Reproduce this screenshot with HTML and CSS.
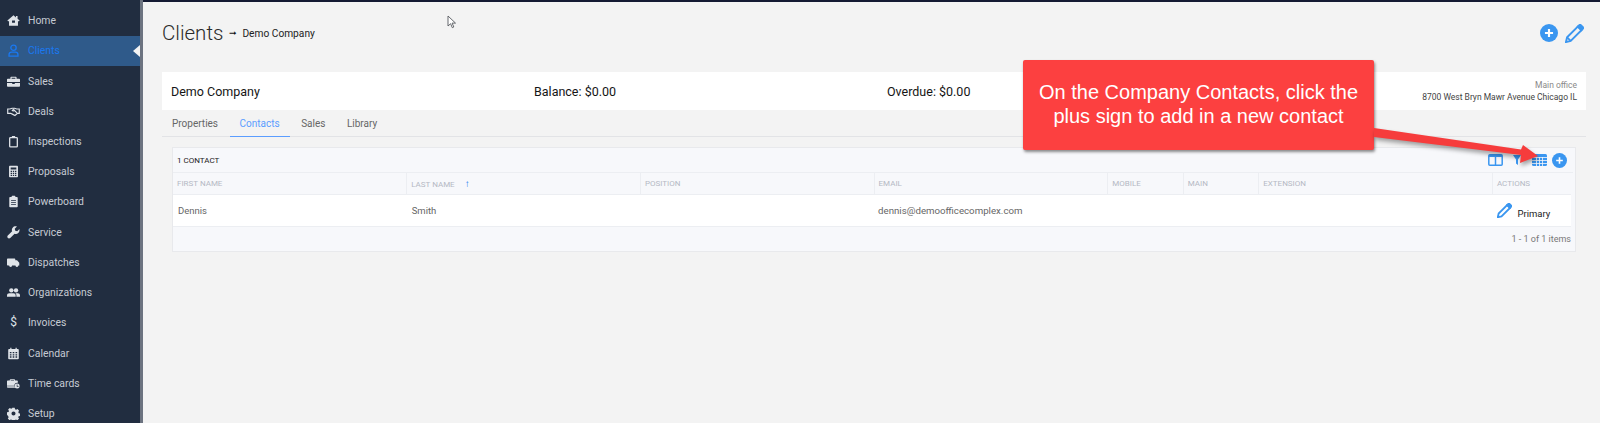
FILE: index.html
```html
<!DOCTYPE html>
<html>
<head>
    <title>Clients</title>
    <link rel="stylesheet" href="styles.css">
</head>
<body>
    <div class="sidebar">
        <a class="nav-item"><svg class="nav-icon" viewBox="0 0 16 16"><path d="M8 1.500 0.500 8l1 1.100L2.500 8.300V14.500h11V8.300l1 .8 1-1.100-2.500-2.200V2.500h-2v1.700zM6.200 8h3.600v2.800H6.200z" fill-rule="evenodd"/></svg>Home</a>
        <a class="nav-item active"><svg class="nav-line nav-user" viewBox="0 0 16 16"><circle cx="8" cy="4.600" r="3.300"/><path d="M2.500 15v-1.800c0-2 1.500-3.200 3.200-3.200h4.600c1.700 0 3.200 1.200 3.200 3.200V15z"/></svg>Clients</a>
        <a class="nav-item"><svg class="nav-icon" viewBox="0 0 16 16"><path d="M5.500 2h5c.8 0 1.300.5 1.300 1.300V4.500H15c.6 0 1 .4 1 1V8.600H0V5.500c0-.6.4-1 1-1h3.200V3.300c0-.8.5-1.300 1.300-1.300zM5.700 3.400V4.500h4.600V3.400zM0 9.800h6.400v1.200h3.200V9.800H16V13.500c0 .6-.4 1-1 1H1c-.6 0-1-.4-1-1z" fill-rule="evenodd"/></svg>Sales</a>
        <a class="nav-item"><svg class="nav-line" viewBox="0 0 18 16"><path d="M1 4.500h3l3-1h3.500l3 1H17v6h-2.500L11 13.500 8 12 5 10.500H1z"/><path d="M10 4 7.200 6.600c.8 1 2 .8 3-.2l3.600 3.400"/></svg>Deals</a>
        <a class="nav-item"><svg class="nav-line" viewBox="0 0 16 16"><rect x="3.300" y="3.300" width="9.400" height="11.400" rx="1"/><path d="M6 2.400h4" stroke-width="2.400"/></svg>Inspections</a>
        <a class="nav-item"><svg class="nav-icon" viewBox="0 0 16 16"><path d="M3.500 1h9c.6 0 1 .4 1 1v12c0 .6-.4 1-1 1h-9c-.6 0-1-.4-1-1V2c0-.6.4-1 1-1zM4.500 3v2.500h7V3zM4.500 7v1.500h1.700V7zM7.200 7v1.500h1.600V7zM9.800 7v1.500h1.700V7zM4.500 9.500V11h1.700V9.500zM7.200 9.500V11h1.600V9.500zM9.800 9.500V11h1.700V9.500zM4.500 12v1.500h1.700V12zM7.200 12v1.500h1.600V12zM9.800 12v1.500h1.700V12z" fill-rule="evenodd"/></svg>Proposals</a>
        <a class="nav-item"><svg class="nav-icon" viewBox="0 0 16 16"><path d="M6.500 1h3c.4 0 .7.300.8.700l.1.800h1.800c.6 0 1 .4 1 1V14c0 .6-.4 1-1 1H3.800c-.6 0-1-.4-1-1V3.500c0-.6.4-1 1-1h1.800l.1-.8c.1-.4.400-.7.800-.7zM5 6v1h6V6zM5 8.500v1h6v-1zM5 11v1h6v-1z" fill-rule="evenodd"/></svg>Powerboard</a>
        <a class="nav-item"><svg class="nav-icon" viewBox="0 0 16 16"><path d="M15.300 3.800 12.600 6.500l-2.400-.7-.7-2.400L12.200.7C10.300.1 8.200.6 7 2 5.900 3.200 5.700 5 6.300 6.500L1 11.800c-.8.800-.8 2.200 0 3 .8.800 2.200.8 3 0l5.300-5.300c1.500.6 3.300.4 4.500-.8 1.400-1.200 1.900-3.200 1.500-4.900z"/></svg>Service</a>
        <a class="nav-item"><svg class="nav-icon" viewBox="0 0 18 16"><path d="M1 2.500h9.500c.6 0 1 .4 1 1V5h2.400l3.100 3.300V12h-1.300a2 2 0 0 1-4 0H7a2 2 0 0 1-4 0H1c-.6 0-1-.4-1-1V3.500c0-.6.4-1 1-1z"/><circle cx="5" cy="12.500" r="1.300"/><circle cx="13.700" cy="12.500" r="1.300"/></svg>Dispatches</a>
        <a class="nav-item"><svg class="nav-icon" viewBox="0 0 18 16"><circle cx="6" cy="5" r="3"/><circle cx="12.500" cy="5" r="3"/><path d="M0 14v-2c0-1.800 1.500-3 3-3h6c1.500 0 3 1.200 3 3v2z"/><path d="M13 14v-2.200c0-1-.4-2-1.200-2.800H15c1.600 0 3 1.200 3 3v2z"/></svg>Organizations</a>
        <a class="nav-item"><span class="nav-icon dollar">$</span>Invoices</a>
        <a class="nav-item"><svg class="nav-icon" viewBox="0 0 16 16"><path d="M4 1h1.500v1.500h5V1H12v1.500h1.500c.6 0 1 .4 1 1V14c0 .6-.4 1-1 1h-11c-.6 0-1-.4-1-1V3.500c0-.6.4-1 1-1H4zM3.500 6v1.700h2V6zM7 6v1.700h2V6zM10.500 6v1.700h2V6zM3.500 8.800v1.700h2V8.800zM7 8.800v1.700h2V8.800zM10.500 8.800v1.700h2V8.800zM3.500 11.500v1.700h2v-1.700zM7 11.500v1.700h2v-1.700zM10.500 11.500v1.700h2v-1.700z" fill-rule="evenodd"/></svg>Calendar</a>
        <a class="nav-item"><svg class="nav-icon" viewBox="0 0 18 16"><path d="M5 2h5c.7 0 1.200.5 1.200 1.200V4H14c.6 0 1 .4 1 1v2a4.500 4.500 0 0 0-5 4H0V5c0-.6.4-1 1-1h2.800v-.8C3.800 2.500 4.300 2 5 2zM5.200 3.200V4h4.600v-.8zM0 11.800h10.200c.2.800.6 1.500 1.200 2.200H1c-.6 0-1-.4-1-1z" fill-rule="evenodd"/><path d="M14 8a3.500 3.500 0 1 0 0 7 3.500 3.500 0 0 0 0-7zm-.5 1.500h1v2h1.500v1h-2.500z" fill-rule="evenodd"/></svg>Time cards</a>
        <a class="nav-item"><svg class="nav-icon" viewBox="0 0 16 16"><path d="M6.500 1h3l.4 1.900 1.300.6 1.700-1 2 2.200-1 1.600.5 1.300 1.600.4v3l-1.700.4-.5 1.300 1 1.600-2.100 2.100-1.600-1-1.300.5-.4 1.600h-3l-.4-1.700-1.300-.5-1.600 1-2.100-2.100 1-1.600-.5-1.300L0 9.500v-3l1.900-.4.500-1.300-1-1.600 2-2.100 1.700 1 1.300-.6zM8 5.500a2.500 2.500 0 1 0 0 5 2.500 2.500 0 0 0 0-5z" fill-rule="evenodd"/></svg>Setup</a>
    </div>

    <div class="main">
        <div class="page-head">
            <h1>Clients</h1>
            <span class="crumb-arrow">&#10142;</span>
            <span class="crumb">Demo Company</span>
            <div class="head-icons">
                <svg class="plus-big" viewBox="0 0 20 20"><circle cx="10" cy="10" r="10" fill="#3a96f0"/><path d="M10 5.500v9M5.500 10h9" stroke="#fff" stroke-width="2.400"/></svg>
                <svg class="pencil-big" viewBox="0 0 20 20" fill="none" stroke="#3a96f0" stroke-width="2"><path d="M1 19l1.200-5L13.500 2.700l3.800 3.800L6 17.800z"/><path d="M14.800 1.400c.6-.6 1.500-.6 2.100 0l1.700 1.700c.6.600.6 1.500 0 2.100l-1.300 1.300-3.800-3.800z" fill="#3a96f0"/><path d="M2.200 14l3.800 3.800"/></svg>
            </div>
        </div>

        <div class="info-bar">
            <div class="info-name">Demo Company</div>
            <div class="info-balance">Balance: $0.00</div>
            <div class="info-overdue">Overdue: $0.00</div>
            <div class="info-office">
                <div class="office-label">Main office</div>
                <div>8700 West Bryn Mawr Avenue Chicago IL</div>
            </div>
        </div>

        <div class="tabs">
            <a class="tab">Properties</a>
            <a class="tab tab-active">Contacts</a>
            <a class="tab">Sales</a>
            <a class="tab">Library</a>
        </div>

        <div class="card">
            <div class="card-head">
                <span class="count">1 CONTACT</span>
                <div class="card-icons">
                    <svg class="tool-columns" viewBox="0 0 15 12" fill="none" stroke="#3a96f0" stroke-width="1.500"><rect x=".8" y=".8" width="13.400" height="10.400" rx="1"/><path d="M7.500 1v10"/><path d="M1 2h13" stroke-width="2"/></svg>
                    <svg class="tool-filter" viewBox="0 0 8 10"><path d="M0 0h8L5 4.500V10L3 8.500V4.500z" fill="#3a96f0"/></svg>
                    <svg class="tool-grid" viewBox="0 0 15 12"><rect width="15" height="12" rx="1.500" fill="#3a96f0"/><path d="M0 3.500h15M0 6.500h15M0 9.500h15M4.500 3v9M7.500 3v9M10.500 3v9" stroke="#f7f8fb" stroke-width=".8"/></svg>
                    <svg class="tool-plus" viewBox="0 0 15 15"><circle cx="7.500" cy="7.500" r="7.500" fill="#3a96f0"/><path d="M7.500 4.200v6.600M4.200 7.500h6.600" stroke="#fff" stroke-width="1.600"/></svg>
                </div>
            </div>
            <table class="contacts">
                <colgroup>
                    <col class="col-wide"><col class="col-wide"><col class="col-wide"><col class="col-wide">
                    <col class="col-small"><col class="col-small"><col class="col-wide"><col class="col-actions">
                </colgroup>
                <tr>
                    <th>FIRST NAME</th>
                    <th>LAST NAME <span class="sort-arrow">&#8593;</span></th>
                    <th>POSITION</th>
                    <th>EMAIL</th>
                    <th>MOBILE</th>
                    <th>MAIN</th>
                    <th>EXTENSION</th>
                    <th>ACTIONS</th>
                </tr>
                <tr>
                    <td>Dennis</td>
                    <td>Smith</td>
                    <td></td>
                    <td class="email">dennis@demoofficecomplex.com</td>
                    <td></td>
                    <td></td>
                    <td></td>
                    <td class="actions">
                        <div class="actions-wrap">
                            <svg class="pencil-small" viewBox="0 0 20 20" fill="none" stroke="#3a96f0" stroke-width="2.400"><path d="M1 19l1.200-5L13.500 2.700l3.800 3.800L6 17.800z"/><path d="M14.800 1.400c.6-.6 1.500-.6 2.100 0l1.700 1.700c.6.600.6 1.500 0 2.100l-1.300 1.300-3.800-3.800z" fill="#3a96f0"/></svg>
                            <span class="primary">Primary</span>
                        </div>
                    </td>
                </tr>
            </table>
            <div class="card-foot">1 - 1 of 1 items</div>
        </div>

        <svg class="cursor" viewBox="0 0 10 14"><path d="M1 1v10l2.600-2.300 1.700 4 1.500-.7-1.700-3.900h3.400z" fill="#fff" stroke="#55585e" stroke-width=".9"/></svg>
    </div>

    <div class="callout">On the Company Contacts, click the plus sign to add in a new contact</div>
    <svg class="arrow" viewBox="0 0 170 40"><path d="M0 0 147 21.500 149 17 164 28 146 35 147 27 0 9z" fill="#f63c3c"/></svg>
</body>
</html>
```

FILE: styles.css
```css
* {
    margin: 0;
    box-sizing: border-box;
}
body {
    display: flex;
    height: 423px;
    overflow: hidden;
    background-color: #f3f3f3;
    font-family: Roboto, sans-serif;
    color: #222;
}

/* left menu */
.sidebar {
    width: 143px;
    flex-shrink: 0;
    padding-top: 5.5px;
    background-color: #212d40;
    border-right: 3px solid #6c7380;
}
.nav-item {
    display: flex;
    align-items: center;
    gap: 8px;
    height: 30.23px;
    padding-left: 7px;
    font-size: 10.4px;
    color: #c6cbd3;
}
.nav-icon,
.nav-line {
    width: 13px;
    height: 13px;
    flex-shrink: 0;
}
.nav-icon {
    fill: #dfe3e8;
}
.nav-line {
    fill: none;
    stroke: #dfe3e8;
    stroke-width: 1.6;
}
.nav-line.nav-user {
    stroke: #1a78f0;
}
.dollar {
    text-align: center;
    font-size: 12px;
    line-height: 13px;
    color: #dfe3e8;
}
.active {
    position: relative;
    background-color: #2f5a8a;
    color: #1a78f0;
}
.active::after {
    content: "";
    position: absolute;
    right: 0;
    top: 9px;
    border-top: 6px solid transparent;
    border-bottom: 6px solid transparent;
    border-right: 7px solid #f3f3f3;
}

/* page */
.main {
    position: relative;
    flex: 1;
    border-top: 2px solid #141a33;
    padding: 0 14px 0 19px;
}
.page-head {
    display: flex;
    align-items: center;
    height: 62px;
}
h1 {
    font-size: 20.5px;
    font-weight: 300;
    color: #2a2a2a;
}
.crumb-arrow {
    margin-left: 6px;
    font-size: 9px;
    color: #111;
}
.crumb {
    margin-left: 5px;
    font-size: 10.2px;
}
.head-icons {
    display: flex;
    align-items: center;
    gap: 7px;
    margin-left: auto;
    padding-right: 2px;
}
.plus-big {
    width: 18px;
    height: 18px;
}
.pencil-big {
    width: 19px;
    height: 19px;
}
.info-bar {
    display: flex;
    align-items: center;
    height: 38px;
    margin-top: 8px;
    padding: 0 9px;
    background-color: #fff;
    font-size: 12.5px;
    color: #151515;
}
.info-name {
    width: 363px;
}
.info-balance {
    width: 353px;
}
.info-office {
    margin-left: auto;
    text-align: right;
    font-size: 8.5px;
    line-height: 12px;
    color: #444;
}
.office-label {
    color: #8a8a8a;
}
.tabs {
    display: flex;
    height: 27px;
    border-bottom: 1px solid #e2e3e6;
}
.tab {
    display: flex;
    align-items: center;
    padding: 0 10px;
    margin-right: 1.5px;
    font-size: 10px;
    color: #666;
}
.tab-active {
    color: #5b9dff;
    border-bottom: 1px solid #5b9dff;
    height: 27px;
}

/* contacts table */
.card {
    margin: 10px 10px 0;
    background-color: #f7f8fb;
    border: 1px solid #e8e9ec;
}
.card-head {
    display: flex;
    align-items: center;
    justify-content: space-between;
    height: 24px;
    padding: 0 8px 0 4px;
}
.count {
    font-size: 8px;
    color: #222;
}
.card-icons {
    display: flex;
    align-items: center;
}
.tool-columns,
.tool-grid {
    width: 15px;
    height: 12px;
}
.tool-filter {
    width: 8px;
    height: 10px;
    margin: 0 11px 0 10px;
}
.tool-plus {
    width: 15px;
    height: 15px;
    margin-left: 5px;
}
.contacts {
    width: 100%;
    table-layout: fixed;
    border-collapse: collapse;
}
.col-wide {
    width: 233.700px;
}
.col-small {
    width: 75.500px;
}
th {
    height: 22px;
    padding: 0 4px;
    text-align: left;
    font-size: 8px;
    font-weight: 400;
    color: #b5b8c4;
    border-top: 1px solid #eceef2;
    border-bottom: 1px solid #eceef2;
    border-left: 1px solid #eceef2;
}
th:first-child {
    border-left: none;
}
.sort-arrow {
    margin-left: 8px;
    font-size: 10px;
    font-weight: 500;
    color: #1a78f0;
}
td {
    height: 32px;
    padding: 0 5px;
    background-color: #fff;
    font-size: 9.500px;
    color: #666;
    border-bottom: 1px solid #eceef2;
}
td.email {
    padding-left: 4px;
    font-size: 9.700px;
}
td.actions {
    border-right: 4px solid #f7f8fb;
}
.actions-wrap {
    display: flex;
    align-items: center;
    gap: 5px;
}
.pencil-small {
    width: 15px;
    height: 15px;
}
.primary {
    margin-top: 5px;
    font-size: 9.500px;
    color: #222;
}
.card-foot {
    height: 24px;
    padding: 7px 4px 0 0;
    text-align: right;
    font-size: 9px;
    color: #777;
}

/* things lying over the page */
.cursor {
    position: absolute;
    left: 304px;
    top: 13px;
    width: 10px;
    height: 14px;
}
.callout {
    position: absolute;
    left: 1023px;
    top: 60px;
    width: 351px;
    height: 90px;
    padding: 21px 10px 0;
    background-color: #fc4040;
    border-radius: 2px;
    box-shadow: 1px 2px 3px rgba(0, 0, 0, 0.45);
    text-align: center;
    font-family: "Liberation Sans", sans-serif;
    font-size: 20px;
    line-height: 23.500px;
    color: #fff;
}
.arrow {
    position: absolute;
    left: 1374px;
    top: 128px;
    width: 170px;
    height: 40px;
    filter: drop-shadow(1px 3px 2px rgba(0, 0, 0, 0.35));
}
```
